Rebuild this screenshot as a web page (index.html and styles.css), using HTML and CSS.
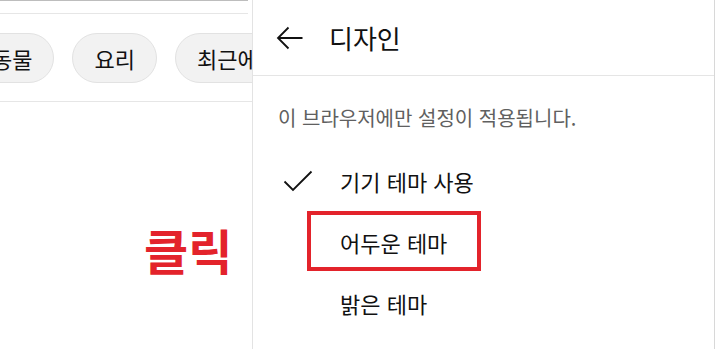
FILE: index.html
```html
<!DOCTYPE html>
<html lang="ko">
<head>
<meta charset="utf-8">
<link rel="stylesheet" href="styles.css">
</head>
<body>
<div class="page">
  <div class="left">
    <div class="search-edge"></div>
    <div class="chips">
      <span class="chip first">동물</span>
      <span class="chip">요리</span>
      <span class="chip">최근에</span>
    </div>
    <div class="click-label">클릭</div>
  </div>
  <div class="panel">
    <div class="panel-header">
      <svg class="back" width="27" height="24" viewBox="0 0 27 24"><path d="M26.5 12H2M12.5 1.5 2 12 12.5 22.5" fill="none" stroke="#111" stroke-width="1.8"/></svg>
      <span class="title">디자인</span>
    </div>
    <div class="panel-body">
      <p class="note">이 브라우저에만 설정이 적용됩니다.</p>
      <div class="option">
        <svg class="check" width="30" height="22" viewBox="0 0 30 22"><path d="M1.5 11.5 10 20 28.5 1.5" fill="none" stroke="#111" stroke-width="1.8"/></svg>
        <span>기기 테마 사용</span>
      </div>
      <div class="option marked"><span>어두운 테마</span></div>
      <div class="option"><span>밝은 테마</span></div>
    </div>
  </div>
  <div class="right-edge"></div>
</div>
</body>
</html>
```
FILE: styles.css
```css
html, body { margin: 0; padding: 0; background: #fff; }
body {
  font-family: "Noto Sans CJK KR", "Noto Sans", sans-serif;
  color: #0f0f0f;
  width: 720px;
  height: 349px;
  overflow: hidden;
}
.page { display: flex; height: 349px; }
.left {
  position: relative;
  width: 252px;
  flex: none;
  overflow: hidden;
}
.search-edge {
  height: 12px;
  border-top: 1px solid #bdbdbd;
  border-bottom: 1px solid #e6e6e6;
  margin-right: 4px;
}
.chips {
  display: flex;
  gap: 18px;
  padding: 19px 0 18px;
  border-bottom: 1px solid #e6e6e6;
  white-space: nowrap;
  margin-right: -100px;
}
.chip {
  flex: none;
  height: 50px;
  box-sizing: border-box;
  display: flex;
  align-items: center;
  padding: 0 21px;
  background: #f2f2f2;
  border: 1px solid #e2e2e2;
  border-radius: 25px;
  font-size: 22px;
  color: #111;
}
.chip.first { margin-left: -30px; }
.click-label {
  position: absolute;
  left: 144px;
  top: 219px;
  font-size: 48px;
  font-weight: 700;
  color: #e3232b;
  line-height: 60px;
}
.panel {
  width: 461px;
  flex: none;
  border-left: 1px solid #e3e3e3;
  border-right: 1px solid #d8d8d8;
}
.panel-header {
  height: 75px;
  border-bottom: 1px solid #e5e5e5;
  display: flex;
  align-items: center;
  padding-left: 23px;
  gap: 26px;
}
.back { flex: none; }
.title { font-size: 26px; color: #111; line-height: 36px; }
.panel-body { padding-top: 27px; }
.note {
  margin: 0 0 17px 25px;
  font-size: 20px;
  color: #606060;
  line-height: 30px;
}
.option {
  position: relative;
  height: 61px;
  display: flex;
  align-items: center;
  padding-left: 87px;
  font-size: 22px;
  color: #111;
}
.check { position: absolute; left: 30px; top: 20px; }
.marked::after {
  content: "";
  position: absolute;
  left: 54px;
  top: 0;
  width: 174px;
  height: 60px;
  box-sizing: border-box;
  border: 4px solid #e3232b;
}
.right-edge { flex: 1; }
```
